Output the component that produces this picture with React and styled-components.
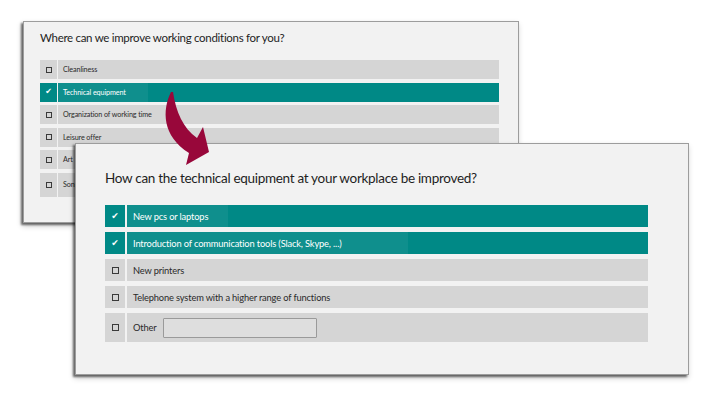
import React from 'react';
import styled, { createGlobalStyle } from 'styled-components';

const GlobalStyle = createGlobalStyle`
    html, body {
        margin: 0;
        padding: 0;
        background: #ffffff;
    }
    body {
        font-family: Lato, "Noto Sans", sans-serif;
    }
`;

const backOptions = [
    { label: 'Cleanliness' },
    { label: 'Technical equipment', checked: true, glow: 22 },
    { label: 'Organization of working time' },
    { label: 'Leisure offer' },
    { label: 'Art' },
    { label: 'Sonstiges', tall: true },
];

const frontOptions = [
    { label: 'New pcs or laptops', checked: true, glow: 20 },
    { label: 'Introduction of communication tools (Slack, Skype, ...)', checked: true, glow: 66 },
    { label: 'New printers' },
    { label: 'Telephone system with a higher range of functions' },
    { label: 'Other', other: true },
];

function Box({ checked, size }) {
    if (checked) return <Tick $size={size}>✔</Tick>;
    return <Square $size={size} />;
}

function Survey({ small, title, options }) {
    return (
        <>
            <Title $small={small}>{title}</Title>
            <List $small={small}>
                {options.map((o) => (
                    <Row key={o.label} $small={small} $checked={o.checked} $tall={o.tall || o.other}>
                        <CheckCell $small={small}>
                            <Box checked={o.checked} size={small ? 6 : 7} />
                        </CheckCell>
                        <LabelCell $small={small}>
                            <Label $glow={o.glow}>{o.label}</Label>
                            {o.other && <OtherInput />}
                        </LabelCell>
                    </Row>
                ))}
            </List>
        </>
    );
}

function Arrow() {
    return (
        <ArrowSvg width="60" height="90" viewBox="160 85 60 90">
            <path
                d="M171,92 C162,110 162,136 189,153 L186,165 L209,152 L203,127 L197,138 C183,128 176,112 173,92 Z"
                fill="#98073a"
            />
        </ArrowSvg>
    );
}

export default function App() {
    return (
        <Canvas>
            <GlobalStyle />
            <BackCard>
                <Survey small title="Where can we improve working conditions for you?" options={backOptions} />
            </BackCard>
            <FrontCard>
                <Survey title="How can the technical equipment at your workplace be improved?" options={frontOptions} />
            </FrontCard>
            <Arrow />
        </Canvas>
    );
}

const Canvas = styled.div`
    position: relative;
    width: 701px;
    height: 402px;
    overflow: hidden;
    background: #ffffff;
`;

const Card = styled.div`
    position: absolute;
    box-sizing: border-box;
    background: #f2f2f2;
    border: 1px solid #9d9d9d;
    box-shadow: -2px 2px 2px rgba(0, 0, 0, 0.55), -1px 3px 6px rgba(0, 0, 0, 0.2);
`;

const BackCard = styled(Card)`
    left: 23px;
    top: 21px;
    width: 496px;
    height: 202px;
    padding: 9px 19px 0 16px;
`;

const FrontCard = styled(Card)`
    left: 75px;
    top: 143px;
    width: 614px;
    height: 232px;
    padding: 25px 40px 0 29px;
`;

const Title = styled.div`
    font-size: ${(p) => (p.$small ? '11.5px' : '13.5px')};
    letter-spacing: -0.3px;
    color: #1e1e1e;
    line-height: ${(p) => (p.$small ? '14px' : '18px')};
`;

const List = styled.div`
    display: flex;
    flex-direction: column;
    gap: ${(p) => (p.$small ? '3.6px' : '5px')};
    margin-top: ${(p) => (p.$small ? '15px' : '18px')};
`;

const Row = styled.div`
    display: flex;
    gap: ${(p) => (p.$small ? '1px' : '2px')};
    height: ${(p) => (p.$tall ? (p.$small ? '24px' : '29px') : p.$small ? '19px' : '22px')};
    & > * {
        background: ${(p) => (p.$checked ? '#008986' : '#d5d5d5')};
        color: ${(p) => (p.$checked ? '#ffffff' : '#2a2a2a')};
    }
`;

const CheckCell = styled.div`
    width: ${(p) => (p.$small ? '17px' : '20px')};
    flex: none;
    display: flex;
    align-items: center;
    justify-content: center;
`;

const LabelCell = styled.div`
    flex: 1;
    display: flex;
    align-items: center;
    padding-left: ${(p) => (p.$small ? '5px' : '6px')};
    font-size: ${(p) => (p.$small ? '7.2px' : '9.3px')};
    letter-spacing: ${(p) => (p.$small ? '-0.1px' : '-0.15px')};
    white-space: nowrap;
    overflow: hidden;
`;

const Label = styled.span`
    align-self: stretch;
    display: flex;
    align-items: center;
    margin-left: -6px;
    padding-left: 6px;
    padding-right: ${(p) => (p.$glow ? `${p.$glow}px` : '0')};
    background: ${(p) => (p.$glow ? 'rgba(255, 255, 255, 0.06)' : 'transparent')};
`;

const Square = styled.span`
    box-sizing: border-box;
    width: ${(p) => p.$size}px;
    height: ${(p) => p.$size}px;
    border: 1.2px solid #3a3a3a;
    background: transparent;
`;

const Tick = styled.span`
    font-family: "DejaVu Sans", sans-serif;
    font-size: ${(p) => p.$size + 2}px;
    font-weight: bold;
    line-height: 1;
    color: #ffffff;
`;

const OtherInput = styled.div`
    width: 154px;
    height: 20px;
    margin-left: 6px;
    box-sizing: border-box;
    border: 1px solid #9a9a9a;
    border-radius: 1px;
    background: #dedede;
`;

const ArrowSvg = styled.svg`
    position: absolute;
    left: 160px;
    top: 85px;
    overflow: visible;
`;
